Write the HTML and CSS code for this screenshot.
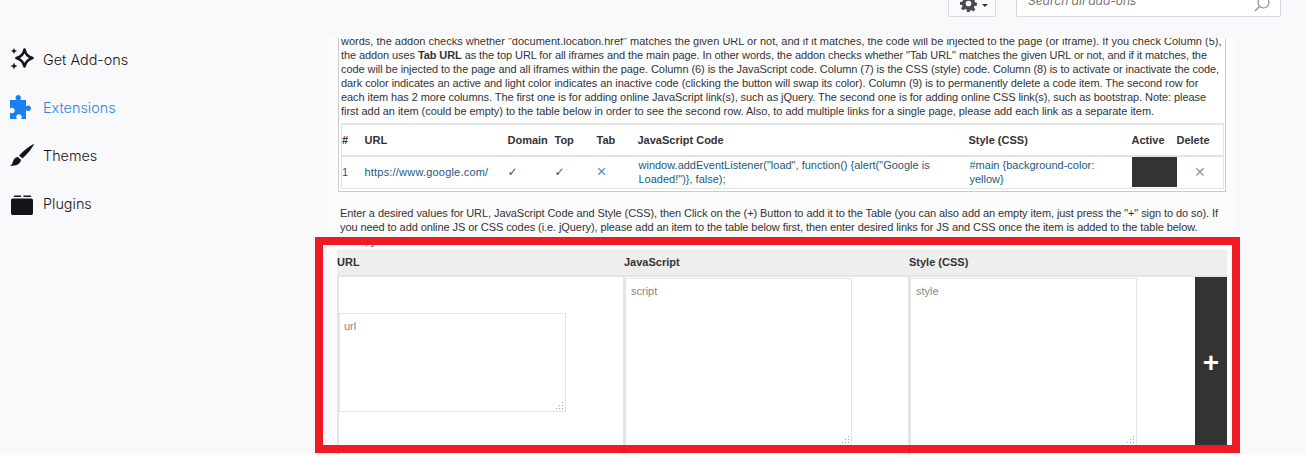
FILE: index.html
```html
<!DOCTYPE html>
<html lang="en">
<head>
<meta charset="utf-8">
<title>Add-ons Manager</title>
<link rel="stylesheet" href="styles.css">
</head>
<body>
<div class="app">
  <nav class="sidebar">
    <a class="nav-item">
      <svg class="nav-icon" viewBox="0 0 24 24"><path d="M14.500 2.500C15.500 7.500 18 10 22.500 11 18 12.500 15.500 15 14.500 19.500 13.500 15 11 12.500 6.500 11 11 10 13.500 7.500 14.500 2.500z" fill="none" stroke="#15141a" stroke-width="2.600" stroke-linejoin="round"/><path d="M4 1l.9 2.100L7 4 4.900 4.900 4 7 3.100 4.900 1 4l2.100-.9zM4 15.500l1 2.500 2.500 1L5 20l-1 2.500L3 20l-2.500-1L3 18z" fill="#15141a"/></svg>
      <span>Get Add-ons</span>
    </a>
    <a class="nav-item nav-item-active">
      <svg class="nav-icon" viewBox="0 0 24 24"><path d="M0 5h6.500C6 4.400 5.500 3.700 5.500 2.800 5.500 1.200 6.700 0 8.200 0s2.800 1.200 2.800 2.800c0 .9-.5 1.600-1 2.200H16v6.500c.6-.5 1.300-1 2.200-1 1.600 0 2.800 1.200 2.800 2.800s-1.200 2.700-2.800 2.700c-.9 0-1.600-.4-2.200-1V24h-5c.4-.6.800-1.200.8-2 0-1.500-1.300-2.700-2.800-2.700S6.200 20.500 6.200 22c0 .8.400 1.400.8 2H0v-6.500c.6.500 1.300.8 2 .8 1.500 0 2.700-1.300 2.700-2.800S3.500 12.700 2 12.700c-.7 0-1.400.3-2 .8z" fill="#1a80f2"/></svg>
      <span>Extensions</span>
    </a>
    <a class="nav-item">
      <svg class="nav-icon" viewBox="0 0 24 24"><path d="M24 1.500c-3 5-7 10-11.500 14l-3.500-3C13 8 19 3.500 23.500 1zM8 14l3 2.800c-.3 3.700-3.500 6.200-11 6.200 2.500-1.500 2.500-3.300 3.200-5.300C4 15.400 6 14 8 14z" fill="#15141a"/></svg>
      <span>Themes</span>
    </a>
    <a class="nav-item">
      <svg class="nav-icon" viewBox="0 0 24 24"><path d="M4.500 4.500h6c.4 0 .7.300.7.700s-.3.800-.7.800h-6c-.4 0-.8-.4-.8-.8s.4-.7.800-.7zM14 4.500h6.500c.5 0 .8.300.8.700s-.3.800-.8.800H14c-.4 0-.8-.4-.8-.8s.4-.7.800-.7zM2.800 7.500h18.400c1 0 1.800.8 1.800 1.800v12.900c0 1-.8 1.800-1.800 1.800H2.800c-1 0-1.800-.8-1.800-1.800V9.300c0-1 .8-1.800 1.800-1.800z" fill="#15141a"/></svg>
      <span>Plugins</span>
    </a>
  </nav>

  <main class="main">
    <header class="topbar">
      <button class="gear-button" type="button">
        <svg class="gear-icon" viewBox="0 0 24 24"><path d="M10 0h4l.7 3.500 2 .8 3-2 2.800 2.800-2 3 .8 2L24 10.800v4l-3.500.7-.8 2 2 3-2.800 2.800-3-2-2 .8L14 24h-4l-.7-3.500-2-.8-3 2-2.800-2.800 2-3-.8-2L0 14v-4l3.500-.7.8-2-2-3L5.100 1.500l3 2 2-.8zM12 8a4 4 0 1 0 0 8 4 4 0 0 0 0-8z" fill="#4a4a4f" fill-rule="evenodd"/></svg>
        <span class="caret"></span>
      </button>
      <div class="search">
        <span class="search-text">Search all add-ons</span>
        <svg class="search-icon" viewBox="0 0 16 16"><circle cx="9.500" cy="6.500" r="5.500" fill="none" stroke="#8f8f9d" stroke-width="1.200"/><path d="M5.500 10.500 1 15" stroke="#8f8f9d" stroke-width="1.400"/></svg>
      </div>
    </header>

    <section class="panel">
      <div class="panel-inner">
        <div class="help-box">
          <p class="help-text"><span class="line-natural">words, the addon checks whether "document.location.href" matches the given URL or not, and if it matches, the code will be injected to the page (or iframe). If you check Column (5),</span><br><span class="line-tight">the addon uses <b>Tab URL</b> as the top URL for all iframes and the main page. In other words, the addon checks whether "Tab URL" matches the given URL or not, and if it matches, the</span><br>code will be injected to the page and all iframes within the page. Column (6) is the JavaScript code. Column (7) is the CSS (style) code. Column (8) is to activate or inactivate the code,<br>dark color indicates an active and light color indicates an inactive code (clicking the button will swap its color). Column (9) is to permanently delete a code item. The second row for<br>each item has 2 more columns. The first one is for adding online JavaScript link(s), such as jQuery. The second one is for adding online CSS link(s), such as bootstrap. Note: please<br><span class="line-loose">first add an item (could be empty) to the table below in order to see the second row. Also, to add multiple links for a single page, please add each link as a separate item.</span></p>
          <table class="items">
            <thead>
              <tr>
                <th class="c-num">#</th><th class="c-url">URL</th><th class="c-domain">Domain</th><th class="c-top">Top</th><th class="c-tab">Tab</th><th class="c-js">JavaScript Code</th><th class="c-css">Style (CSS)</th><th class="c-active">Active</th><th class="c-delete">Delete</th>
              </tr>
            </thead>
            <tbody>
              <tr>
                <td>1</td>
                <td class="link">https://www.google.com/</td>
                <td class="mark">✓</td>
                <td class="mark">✓</td>
                <td class="mark-off">×</td>
                <td class="code-cell">window.addEventListener("load", function() {alert("Google is Loaded!")}, false);</td>
                <td class="code-cell style-cell">#main {background-color: yellow}</td>
                <td class="active-cell"><span class="active-swatch"></span></td>
                <td class="delete-cell">✕</td>
              </tr>
            </tbody>
          </table>
        </div>
        <p class="intro">Enter a desired values for URL, JavaScript Code and Style (CSS), then Click on the (+) Button to add it to the Table (you can also add an empty item, just press the "+" sign to do so). If<br>you need to add online JS or CSS codes (i.e. jQuery), please add an item to the table below first, then enter desired links for JS and CSS once the item is added to the table below.<br>Then, you can add online links for JS and CSS.</p>
        <div class="form">
          <div class="form-head">
            <span>URL</span><span>JavaScript</span><span>Style (CSS)</span><span></span>
          </div>
          <div class="form-body">
            <div class="form-cell form-cell-url"><div class="area area-url"><span>url</span><i class="grip"></i></div></div>
            <div class="form-cell"><div class="area"><span>script</span><i class="grip"></i></div></div>
            <div class="form-cell"><div class="area"><span>style</span><i class="grip"></i></div></div>
            <button class="add" type="button">+</button>
          </div>
        </div>
      </div>
    </section>
    <div class="highlight"></div>
  </main>
</div>
</body>
</html>
```
FILE: styles.css
```css
* { box-sizing: border-box; }
html, body { margin: 0; height: 100%; overflow: hidden; }
body { background: #f9f9fb; font-family: "Liberation Sans", Arial, sans-serif; color: #333; }
.app { display: flex; width: 1305px; height: 455px; }

.sidebar { width: 327px; flex: none; padding: 35px 0 0 10px; display: flex; flex-direction: column; font-family: Inter, "Noto Sans", sans-serif; font-size: 14.4px; font-weight: 300; color: #15141a; }
.nav-item { display: flex; align-items: center; height: 48px; gap: 9px; }
.nav-item-active { color: #2a86e6; }
.nav-icon { width: 24px; height: 24px; flex: none; }

.main { position: relative; width: 978px; flex: none; display: flex; flex-direction: column; }
.topbar { height: 38px; flex: none; display: flex; align-items: flex-start; padding-left: 621px; gap: 20px; }
.gear-button { width: 48px; height: 17px; background: #fbfbfd; border: 1px solid #d7d7db; border-top: 0; border-radius: 0 0 2px 2px; padding: 0 0 0 11px; display: flex; align-items: flex-end; overflow: hidden; }
.gear-icon { width: 17px; height: 17px; margin-bottom: 4px; flex: none; }
.caret { width: 0; height: 0; border: 3px solid transparent; border-top-color: #333; border-bottom: 0; margin: 0 0 9px 5px; }
.search { width: 265px; height: 17px; background: #fff; border: 1px solid #d7d7db; border-top: 0; border-radius: 0 0 2px 2px; display: flex; align-items: flex-end; justify-content: space-between; padding: 0 10px 0 11px; overflow: hidden; }
.search-text { font-family: Inter, "Noto Sans", sans-serif; font-style: italic; font-size: 12px; line-height: 16px; margin-bottom: 7px; color: #737373; }
.search-icon { width: 16px; height: 16px; flex: none; margin-bottom: 4px; }

.panel { width: 909px; flex: 1; min-height: 0; overflow: hidden; background: #fcfcfc; padding: 0 10px 0 11px; }
.panel-inner { margin-top: -4px; }
.help-box { background: #fff; border: 1px solid #ccc; border-top: 0; padding: 0 1px 2px 2px; }
.help-text { margin: 0 0 5px; font-size: 11px; line-height: 14px; white-space: nowrap; letter-spacing: -0.065px; }
.line-natural { letter-spacing: 0; }
.line-tight { letter-spacing: -0.09px; }
.line-loose { letter-spacing: -0.04px; }
.items { width: 100%; border-collapse: collapse; table-layout: fixed; font-size: 11px; border: 1px solid #e4e4e4; }
.items th { height: 32px; padding: 0; text-align: left; font-weight: bold; border-top: 2px solid #e4e4e4; border-bottom: 2px solid #e4e4e4; }
.items td { height: 32px; padding: 0; color: #1c5a7d; line-height: 14px; font-size: 11px; }
.items .link { letter-spacing: 0.2px; }
.items .code-cell { padding-left: 1px; }
.items .style-cell { padding-right: 30px; }
.c-num { width: 23px; }
.c-url { width: 143px; }
.c-domain { width: 47px; }
.c-top { width: 42px; }
.c-tab { width: 41px; }
.c-js { width: 331px; }
.c-css { width: 163px; }
.c-active { width: 45px; }
.items .mark { font-family: "DejaVu Sans", sans-serif; font-size: 12px; }
.items .mark-off { font-size: 17px; font-weight: normal; color: #5a90ad; }
.active-cell { vertical-align: middle; }
.active-swatch { display: block; height: 30px; background: #333; }
.items .delete-cell { text-align: center; color: #999; font-family: "DejaVu Sans", sans-serif; font-size: 14px; font-weight: bold; }

.intro { margin: 14px 0 0 2px; font-size: 11px; line-height: 14px; white-space: nowrap; letter-spacing: -0.08px; }

.form { margin: 2px 0 0 -1px; width: 890px; background: #fff; }
.form-head { display: grid; grid-template-columns: 287px 285px 286px 32px; height: 27px; align-items: center; background: #eee; font-size: 11px; font-weight: bold; border-bottom: 2px solid #e4e4e4; }
.form-body { display: grid; grid-template-columns: 286px 285px 287px 32px; height: 190px; align-items: start; }
.form-cell { border-left: 2px solid #e4e4e4; padding-top: 1px; height: 190px; }
.form-cell-url { padding-top: 36px; }
.area { position: relative; width: 227px; height: 168px; background: #fff; border: 1px solid #e4e4e4; padding: 6px 5px; font-size: 11px; color: #888; }
.area-url { height: 99px; padding-left: 4px; }
.grip { position: absolute; right: 1px; bottom: 1px; width: 9px; height: 9px; background: radial-gradient(circle, #999 0.6px, transparent 1px) 0 0 / 3px 3px; clip-path: polygon(100% 0, 100% 100%, 0 100%); }
.add { background: #333; color: #fff; border: 0; padding: 0; font: bold 28px/1 "Liberation Sans", Arial, sans-serif; height: 172px; }

.highlight { position: absolute; left: -12px; top: 237px; width: 925px; height: 216px; border: 8px solid #ed1c24; pointer-events: none; }
```
